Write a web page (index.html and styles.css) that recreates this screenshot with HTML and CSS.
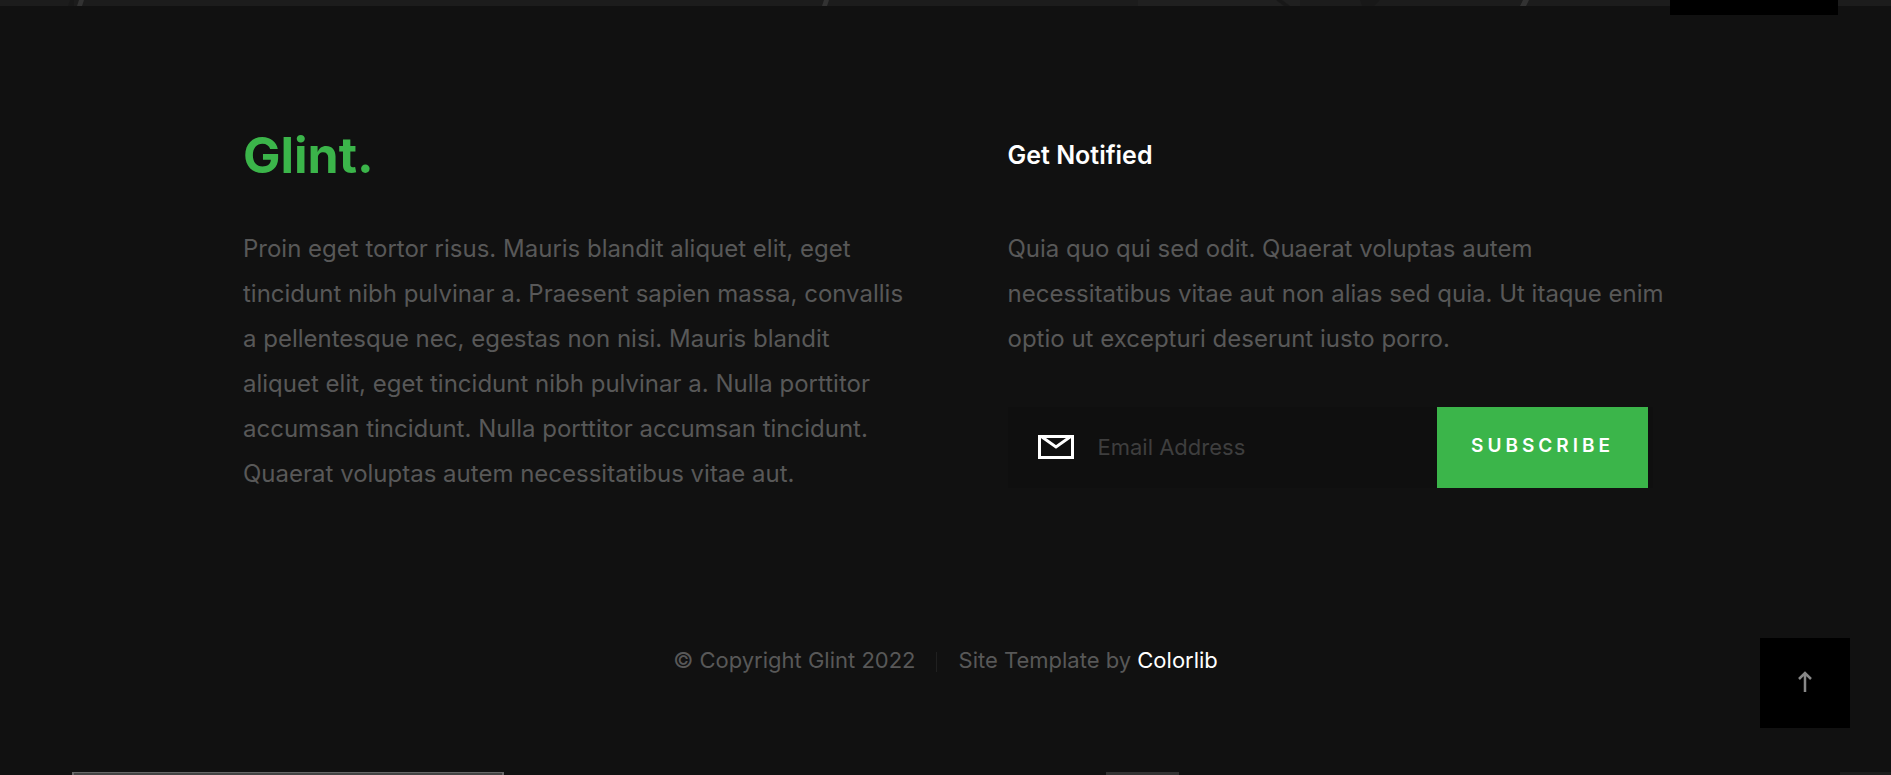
FILE: index.html
```
<!DOCTYPE html>
<html lang="en">
<head>
<meta charset="utf-8">
<title>Glint</title>
<link rel="stylesheet" href="styles.css">
</head>
<body>
<div class="page">
  <section class="contact-edge">
    <svg class="streaks" viewBox="0 0 1891 6" preserveAspectRatio="none" aria-hidden="true">
      <path d="M1138 0H1300V6H1138Z" fill="#202020"/>
      <path d="M70 0H74V6H68ZM1276 0H1282L1290 6H1284ZM1360 0H1380L1374 6H1362Z" fill="#181818"/>
      <path d="M79 0H84L82 6H77ZM824 0H829L827 6H822ZM1523 0H1529L1526 6H1520Z" fill="#323232"/>
    </svg>
    <div class="contact-box"></div>
  </section>
  <footer class="footer">
    <div class="footer-main">
      <section class="about">
        <a class="logo" href="#">Glint.</a>
        <p class="text">Proin eget tortor risus. Mauris blandit aliquet elit, eget<br>tincidunt nibh pulvinar a. Praesent sapien massa, convallis<br>a pellentesque nec, egestas non nisi. Mauris blandit<br>aliquet elit, eget tincidunt nibh pulvinar a. Nulla porttitor<br>accumsan tincidunt. Nulla porttitor accumsan tincidunt.<br>Quaerat voluptas autem necessitatibus vitae aut.</p>
      </section>
      <section class="notify">
        <h4 class="heading">Get Notified</h4>
        <p class="text">Quia quo qui sed odit. Quaerat voluptas autem<br>necessitatibus vitae aut non alias sed quia. Ut itaque enim<br>optio ut excepturi deserunt iusto porro.</p>
        <form class="subscribe">
          <label class="mail" for="email" aria-label="Email Address">
            <svg class="mail-icon" viewBox="0 0 36 24" aria-hidden="true"><path d="M1.5 1.5H34.500V22.500H1.500ZM4 2L18 12L32 2" fill="none" stroke="#fff" stroke-width="3"/></svg>
          </label>
          <input class="email" id="email" type="email" placeholder="Email Address">
          <button class="send" type="submit">Subscribe</button>
        </form>
      </section>
    </div>
    <div class="copyright">
      <span class="copy-item">© Copyright Glint 2022</span>
      <span class="copy-item">Site Template by <a class="credit" href="#">Colorlib</a></span>
    </div>
  </footer>
  <div class="bottom-edge">
    <div class="edge-panel"></div>
    <div class="edge-tab"></div>
    <div class="edge-end"></div>
  </div>
</div>
<a class="go-top" href="#" aria-label="Back to top">
  <svg class="arrow" viewBox="0 0 14 22" aria-hidden="true"><path d="M7 21V2M1 8L7 2L13 8" fill="none" stroke="#888" stroke-width="2.500"/></svg>
</a>
</body>
</html>
```
FILE: styles.css
```
* { box-sizing: border-box; }
body {
  margin: 0;
  background: #111;
  color: #585858;
  font-family: Inter, "Open Sans", sans-serif;
  overflow: hidden;
}
.page {
  min-height: 100vh;
  display: flex;
  flex-direction: column;
}
.contact-edge {
  position: relative;
  height: 6px;
  background: #1c1c1c;
}
.streaks { display: block; width: 100%; height: 100%; }
.contact-box {
  position: absolute;
  top: 0;
  right: 53px;
  width: 168px;
  height: 15px;
  background: #000;
}
.footer { flex: 1; padding: 119px 24px 0; }
.footer-main {
  max-width: 1405px;
  margin: 0 auto;
  display: grid;
  grid-template-columns: minmax(0, 1fr) minmax(0, 1fr);
  gap: 124px;
}
.logo {
  display: block;
  color: #3bb54a;
  font-size: 50px;
  line-height: 60px;
  font-weight: 700;
  text-decoration: none;
}
.heading {
  margin: 0;
  color: #fff;
  font-size: 25px;
  line-height: 60px;
  font-weight: 600;
}
.text {
  margin: 41px 0 0;
  font-size: 24px;
  line-height: 45px;
  white-space: nowrap;
}
.notify .text { font-size: 24px; }
.subscribe {
  display: flex;
  height: 81px;
  margin: 46px -5px 0 0;
  padding-right: 5px;
  background: #0f0f0f;
}
.mail { display: flex; align-items: center; padding: 0 0 2px 30px; }
.mail-icon { width: 36px; height: 24px; }
.email {
  flex: 1;
  width: 0;
  min-width: 0;
  padding: 0 24px 2px;
  border: 0;
  outline: 0;
  background: transparent;
  color: #fff;
  font: 22px Inter, "Open Sans", sans-serif;
}
.email::placeholder { color: #3e3e3e; opacity: 1; }
.send {
  width: 211px;
  padding: 0 0 5px;
  border: 0;
  background: #3bb54a;
  color: #fff;
  font: 600 19px Inter, "Open Sans", sans-serif;
  letter-spacing: 4px;
  text-transform: uppercase;
}
.copyright {
  display: flex;
  justify-content: center;
  margin-top: 149px;
  font-size: 22px;
  line-height: 30px;
}
.copy-item + .copy-item::before {
  content: "";
  display: inline-block;
  width: 1px;
  height: 20px;
  margin: 0 22px 0 20px;
  background: #202020;
  vertical-align: middle;
}
.credit { color: #fff; text-decoration: none; }
.bottom-edge { display: flex; height: 3px; padding-left: 72px; }
.edge-panel {
  width: 432px;
  border: solid #686868;
  border-width: 1px 2px 0;
  background: #444;
}
.edge-tab { width: 73px; margin-left: 602px; background: #333; }
.edge-end { width: 51px; margin-left: auto; background: #1c1c1c; }
.go-top {
  position: fixed;
  right: 41px;
  bottom: 47px;
  width: 90px;
  height: 90px;
  padding-bottom: 2px;
  display: grid;
  place-items: center;
  background: #000;
}
.arrow { width: 14px; height: 22px; }
```
